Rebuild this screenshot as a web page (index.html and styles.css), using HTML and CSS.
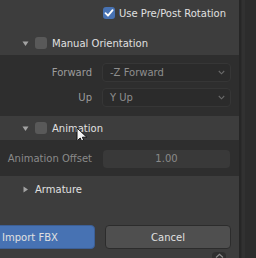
FILE: index.html
```html
<!DOCTYPE html>
<html lang="en">
<head>
   <meta charset="UTF-8">
   <meta name="viewport" content="width=device-width">
   <title>Import FBX</title>
   <link rel="stylesheet" href="styles.css">
</head>
<body>
   <div class="panel">
       <div class="block light top">
           <div class="check-row">
               <span class="checkbox checked">
                   <svg width="12" height="12" viewBox="0 0 12 12"><path d="M2.5 6.2 L5 8.7 L9.6 3.2" fill="none" stroke="#fff" stroke-width="1.8" stroke-linecap="round" stroke-linejoin="round"/></svg>
               </span>
               <span class="label">Use Pre/Post Rotation</span>
           </div>
           <div class="sub-header">
               <svg class="arrow" width="7" height="7" viewBox="0 0 7 7"><path d="M0.5 1.5 H6.5 L3.5 6 Z" fill="#a3a3a3"/></svg>
               <span class="checkbox"></span>
               <span class="label">Manual Orientation</span>
           </div>
       </div>

       <div class="block dark orient">
           <div class="prop-row">
               <span class="prop-label">Forward</span>
               <div class="dropdown">
                   <span>-Z Forward</span>
                   <svg width="7" height="5" viewBox="0 0 7 5"><path d="M0.8 1 L3.5 3.8 L6.2 1" fill="none" stroke="#6a6a6a" stroke-width="1.1"/></svg>
               </div>
           </div>
           <div class="prop-row">
               <span class="prop-label">Up</span>
               <div class="dropdown">
                   <span>Y Up</span>
                   <svg width="7" height="5" viewBox="0 0 7 5"><path d="M0.8 1 L3.5 3.8 L6.2 1" fill="none" stroke="#6a6a6a" stroke-width="1.1"/></svg>
               </div>
           </div>
       </div>

       <div class="block light anim-header">
           <div class="sub-header">
               <svg class="arrow" width="7" height="7" viewBox="0 0 7 7"><path d="M0.5 1.5 H6.5 L3.5 6 Z" fill="#a3a3a3"/></svg>
               <span class="checkbox"></span>
               <span class="label">Animation</span>
           </div>
           <svg class="cursor" width="13" height="18" viewBox="0 0 13 18"><path d="M1 1 L1 14 L4.2 11 L6.5 16.2 L8.6 15.3 L6.4 10.2 L10.8 10.2 Z" fill="#f4f4f4" stroke="#111" stroke-width="1" stroke-linejoin="round"/></svg>
       </div>

       <div class="block dark offset">
           <div class="prop-row">
               <span class="prop-label wide">Animation Offset</span>
               <div class="num-field">1.00</div>
           </div>
       </div>

       <div class="block light bottom">
           <div class="sub-header closed">
               <svg class="arrow" width="7" height="7" viewBox="0 0 7 7"><path d="M1.5 0.5 V6.5 L6 3.5 Z" fill="#a3a3a3"/></svg>
               <span class="label">Armature</span>
           </div>
           <div class="buttons">
               <button class="btn primary">Import FBX</button>
               <button class="btn">Cancel</button>
           </div>
           <div class="tab-up">
               <svg width="9" height="5" viewBox="0 0 9 5"><path d="M1 4.5 L4.5 1.2 L8 4.5" fill="none" stroke="#8a8a8a" stroke-width="1.2"/></svg>
           </div>
       </div>
   </div>
   <div class="scroll-strip"><div class="scroll-line"></div></div>
</body>
</html>
```

FILE: styles.css
```css
body {
    margin: 0;
    width: 256px;
    height: 258px;
    overflow: hidden;
    display: flex;
    background-color: #2c2c2c;
    font-family: "DejaVu Sans", sans-serif;
    font-size: 10px;
    color: #e0e0e0;
}
.panel {
    width: 239px;
    display: flex;
    flex-direction: column;
    overflow: hidden;
}
.block {
    position: relative;
    flex-shrink: 0;
}
.light { background-color: #3d3d3d; }
.dark { background-color: #2e2e2e; }

.top { height: 55px; }
.orient { height: 61px; padding-top: 8px; box-sizing: border-box; }
.anim-header { height: 24px; }
.offset { height: 36px; padding-top: 9px; box-sizing: border-box; }
.bottom { flex: 1 0 auto; }

.check-row {
    height: 26px;
    display: flex;
    align-items: center;
    padding-left: 103px;
}
.check-row .label { margin-left: 4px; }

.checkbox {
    width: 12px;
    height: 12px;
    border-radius: 3px;
    background-color: #595959;
    display: flex;
}
.checkbox.checked { background-color: #4772b3; }

.sub-header {
    height: 24px;
    display: flex;
    align-items: center;
    padding-left: 22px;
}
.top .sub-header { margin-top: 5px; }
.sub-header .arrow { margin-right: 6px; }
.sub-header .label { margin-left: 5px; }
.sub-header.closed { height: 26px; }
.sub-header.closed .label { margin-left: 0; }

.prop-row {
    display: flex;
    align-items: center;
    height: 19px;
    margin-bottom: 6px;
}
.prop-label {
    width: 92px;
    text-align: right;
    color: #9c9c9c;
    margin-right: 10px;
}
.dropdown {
    width: 129px;
    height: 19px;
    box-sizing: border-box;
    border: 1px solid #363636;
    border-radius: 4px;
    background-color: #2b2b2b;
    display: flex;
    align-items: center;
    justify-content: space-between;
    padding: 0 5px 0 7px;
    color: #8e8e8e;
}
.num-field {
    width: 127px;
    height: 18px;
    margin-left: 1px;
    border-radius: 4px;
    background-color: #393939;
    color: #8a8a8a;
    display: flex;
    align-items: center;
    justify-content: center;
}
.wide { color: #8a8a8a; }

.cursor {
    position: absolute;
    left: 76px;
    top: 11px;
}

.buttons {
    display: flex;
    gap: 10px;
    margin-top: 23px;
}
.btn {
    height: 24px;
    border-radius: 4px;
    border: 1px solid #2c2c2c;
    background-color: #4f4f4f;
    color: #e0e0e0;
    font-family: "DejaVu Sans", sans-serif;
    font-size: 10px;
    padding: 0;
    width: 126px;
}
.btn.primary {
    width: 130px;
    margin-left: -35px;
    background-color: #4772b3;
    border-color: #3c5f96;
}
.tab-up {
    width: 14px;
    height: 10px;
    margin: 3px 0 0 212px;
    border-radius: 4px 4px 0 0;
    background-color: #2f2f2f;
    display: flex;
    justify-content: center;
    padding-top: 1px;
    box-sizing: border-box;
}

.scroll-strip {
    flex: 1;
    border-left: 2px solid #262626;
    background-color: #2c2c2c;
}
.scroll-line {
    width: 3px;
    height: 100%;
    margin-left: 1px;
    background-color: #313131;
}
```
